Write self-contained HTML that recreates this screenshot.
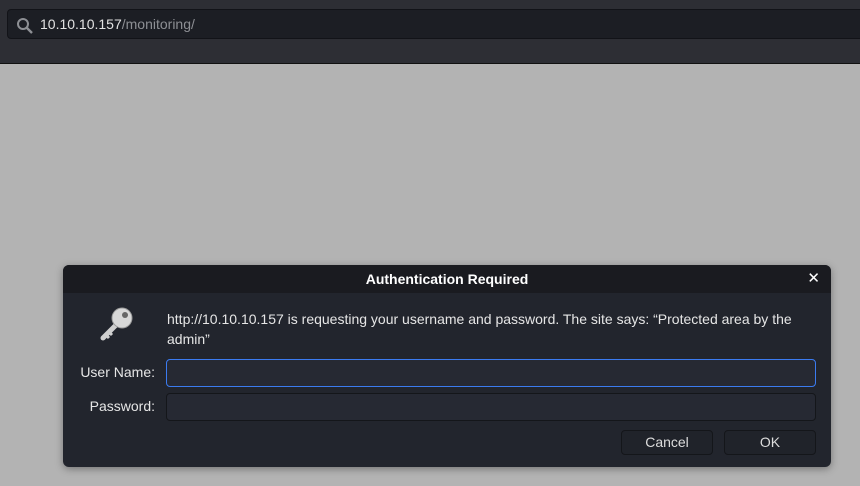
<!DOCTYPE html>
<html><head><style>
*{margin:0;padding:0;box-sizing:border-box}
body{width:860px;height:486px;overflow:hidden;background:#b3b3b3;font-family:"Liberation Sans","DejaVu Sans",sans-serif;position:relative}
#top{position:absolute;left:0;top:0;width:860px;height:64px;background:#2d2e34;border-bottom:1px solid #111}
#url{position:absolute;left:7px;top:9px;width:860px;height:30px;background:#1c1e24;border:1px solid #121318;border-radius:4px;color:#e2e2e2;font-size:14px;line-height:28px;padding-left:32px}
#url span{color:#8d8f94}
#url svg{position:absolute;left:8px;top:7px}
#dlg{position:absolute;left:63px;top:265px;width:768px;height:202px;background:#22252d;border-radius:6px;box-shadow:0 2px 8px rgba(0,0,0,.35);overflow:hidden}
#tb{height:28px;background:#1a1b20;color:#fff;font-weight:bold;font-size:14px;text-align:center;line-height:28px}
#x{position:absolute;right:11px;top:0;line-height:28px;font-size:15px;color:#fff}
.t{position:absolute;color:#e6e6e6;font-size:14px}
.lb{width:92px;text-align:right;left:0}
.in{position:absolute;left:103px;width:650px;height:28px;background:#262933;border:1px solid #14161a;border-radius:4px}
.btn{position:absolute;top:165px;height:25px;border:1px solid #14161a;border-radius:4px;background:#20232a;color:#ddd;font-size:14px;text-align:center;line-height:23px}
</style></head><body>
<div id="top"><div id="url"><svg width="18" height="18" viewBox="0 0 18 18"><circle cx="7" cy="7" r="5" fill="none" stroke="#8d8f94" stroke-width="2"/><path d="M11 11l5 5" stroke="#8d8f94" stroke-width="2.4"/></svg>10.10.10.157<span>/monitoring/</span></div></div>
<div id="dlg">
<div id="tb">Authentication Required</div><div id="x">✕</div>
<svg style="position:absolute;left:34px;top:40px" width="40" height="36" viewBox="0 0 40 36"><path d="M6 33l14-14" stroke="#cfcfcf" stroke-width="5" stroke-linecap="round"/><path d="M9 30l3 3M12 27l3 3" stroke="#cfcfcf" stroke-width="3"/><circle cx="25" cy="13" r="10" fill="#d8d8d8" stroke="#999" stroke-width="1"/><circle cx="28" cy="10" r="3" fill="#666"/></svg>
<div class="t" style="left:104px;top:44px;width:660px;line-height:20px">http://10.10.10.157 is requesting your username and password. The site says: “Protected area by the admin”</div>
<div class="t lb" style="top:99px">User Name:</div>
<div class="in" style="top:94px;border:1px solid #3b7bf0"></div>
<div class="t lb" style="top:133px">Password:</div>
<div class="in" style="top:128px"></div>
<div class="btn" style="left:558px;width:92px">Cancel</div>
<div class="btn" style="left:661px;width:92px">OK</div>
</div>
</body></html>
